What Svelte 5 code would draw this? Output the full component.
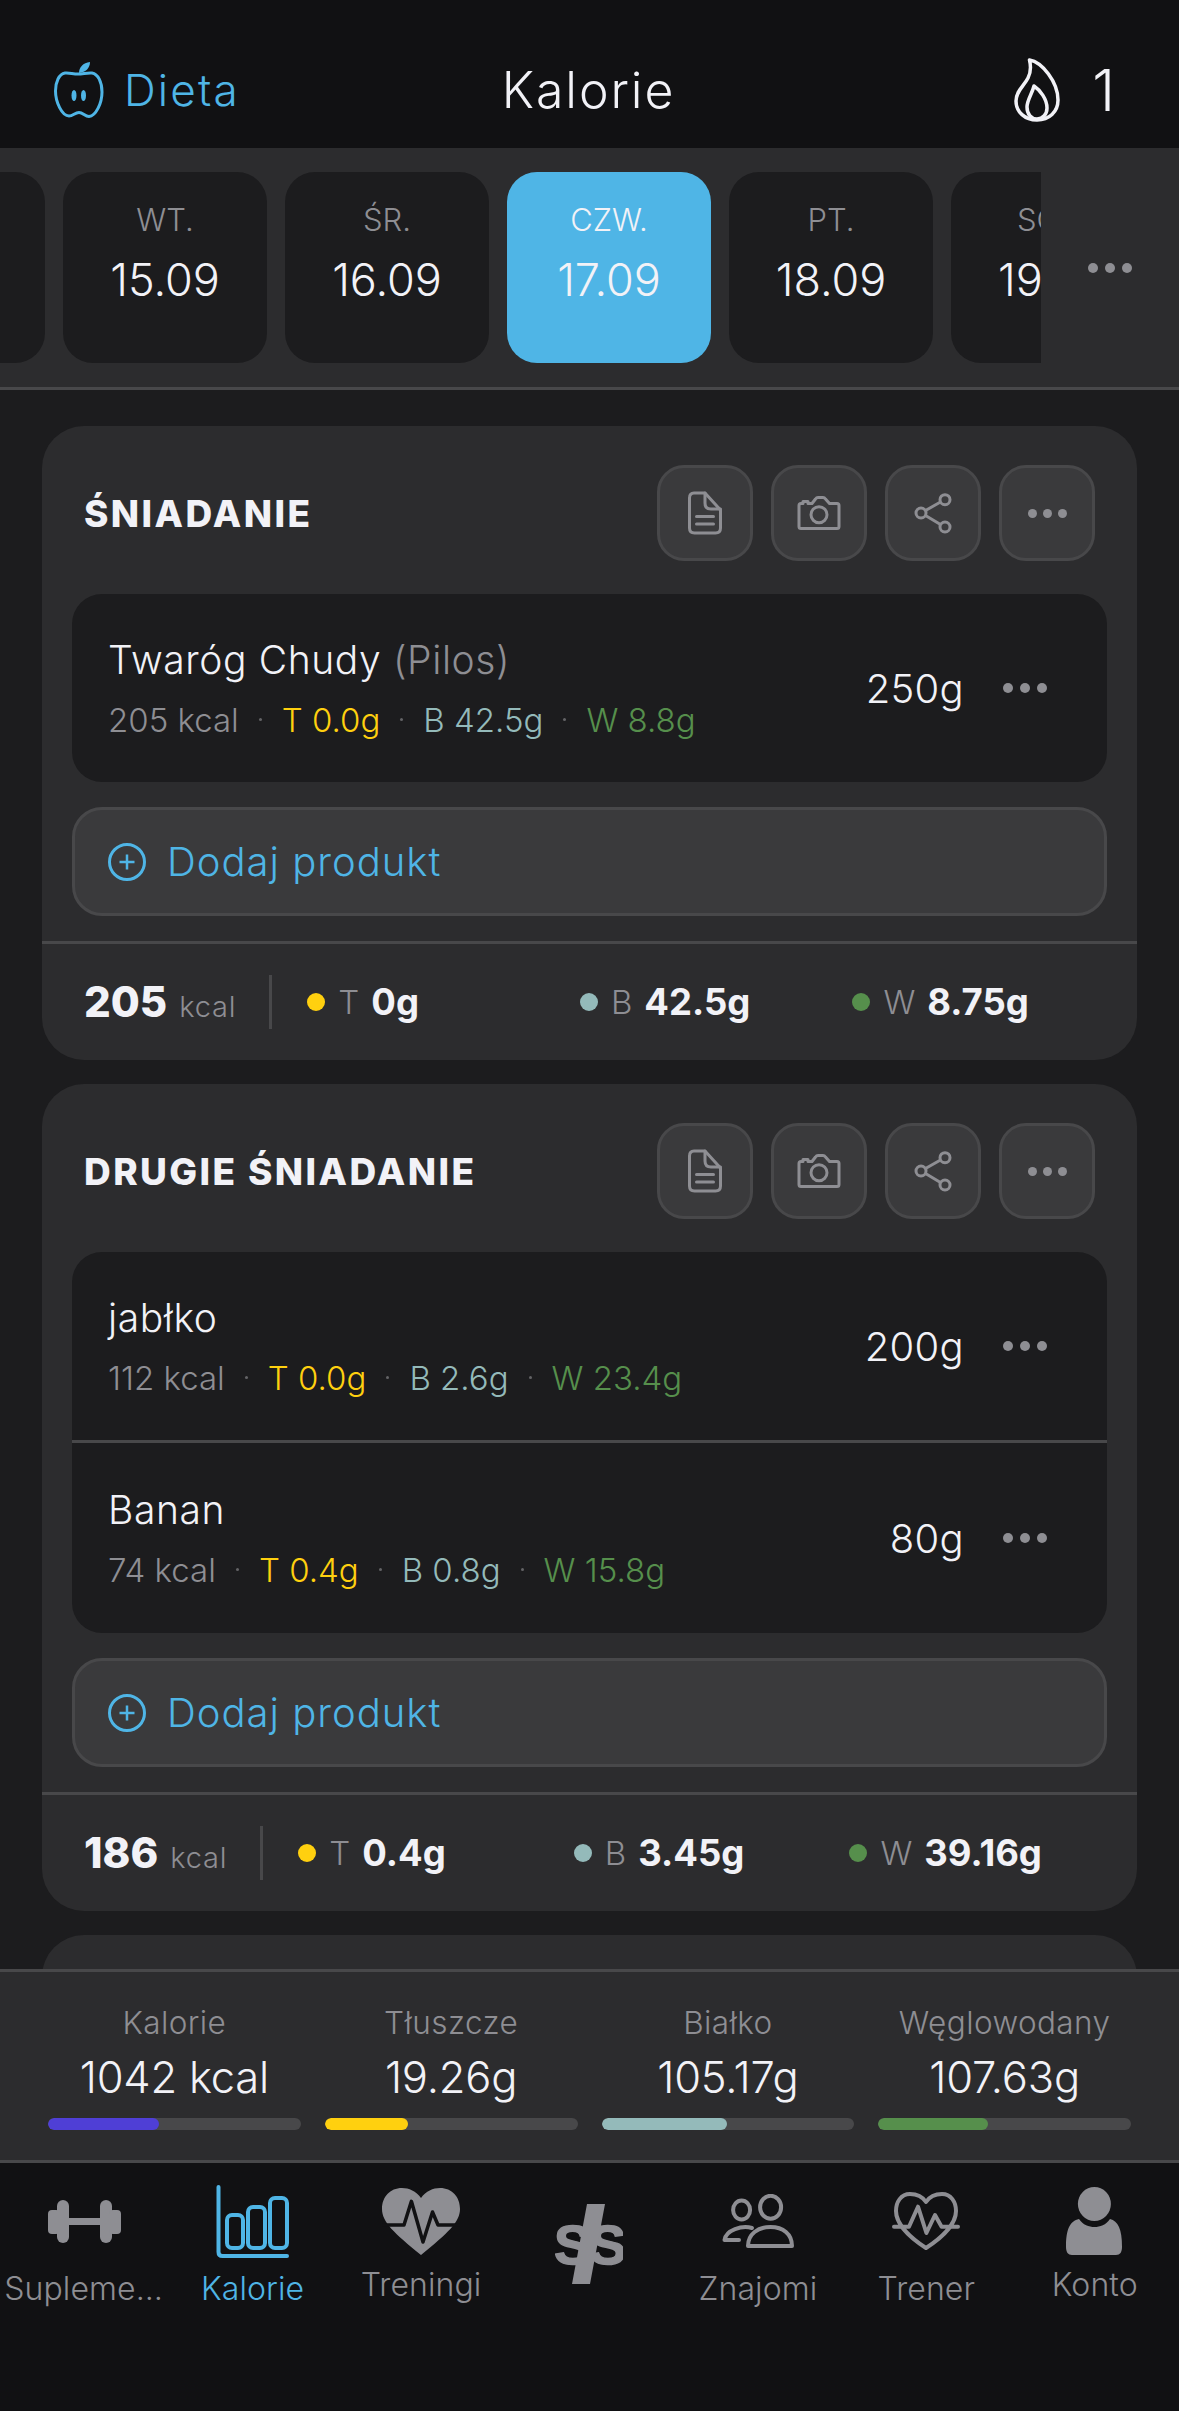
<script>
  const days = [
    { name: "ŚR.", date: "14.09" },
    { name: "WT.", date: "15.09" },
    { name: "ŚR.", date: "16.09" },
    { name: "CZW.", date: "17.09", active: true },
    { name: "PT.", date: "18.09" },
    { name: "SOB.", date: "19.09" },
  ];

  const meals = [
    {
      name: "Śniadanie",
      items: [
        { name: "Twaróg Chudy", brand: "(Pilos)", kcal: 205, t: "0.0g", b: "42.5g", w: "8.8g", grams: "250g" },
      ],
      kcal: 205,
      t: "0g",
      b: "42.5g",
      w: "8.75g",
    },
    {
      name: "Drugie śniadanie",
      items: [
        { name: "jabłko", kcal: 112, t: "0.0g", b: "2.6g", w: "23.4g", grams: "200g" },
        { name: "Banan", kcal: 74, t: "0.4g", b: "0.8g", w: "15.8g", grams: "80g" },
      ],
      kcal: 186,
      t: "0.4g",
      b: "3.45g",
      w: "39.16g",
    },
  ];

  const totals = [
    { label: "Kalorie", value: "1042 kcal", fill: 44, color: "#4f3fd6" },
    { label: "Tłuszcze", value: "19.26g", fill: 33, color: "#ffd00f" },
    { label: "Białko", value: "105.17g", fill: 49.5, color: "#94baba" },
    { label: "Węglowodany", value: "107.63g", fill: 43.5, color: "#568f4c" },
  ];
</script>

{#snippet dots()}
  <span class="dots"><i></i><i></i><i></i></span>
{/snippet}

<div class="app">
  <header class="topbar">
    <div class="back">
      <svg width="50" height="58" viewBox="0 0 50 58" fill="none" stroke="currentColor" stroke-width="3">
        <path d="M24 13C19 13 15 11.5 11 12C5 13 1.5 21 1.5 30C1.5 41 8 55 15 55C19 55 21 51.5 25 51.5C29 51.5 31 55.5 35 55.5C42 55 48 42 48 31C48 21 44 13 38 12C33 11.5 29 13 24 13Z" />
        <path d="M25 12C25 6 29 2 36 1C36 7 32 11 25 12Z" fill="currentColor" stroke="none" />
        <ellipse cx="20" cy="34.5" rx="2.5" ry="5.5" fill="currentColor" stroke="none" />
        <ellipse cx="29.5" cy="34.5" rx="2.5" ry="5.5" fill="currentColor" stroke="none" />
      </svg>
      <span>Dieta</span>
    </div>
    <h1>Kalorie</h1>
    <div class="streak">
      <svg width="46" height="64" viewBox="0 0 46 64" fill="none" stroke="currentColor" stroke-width="3.5" stroke-linejoin="round">
        <path d="M15.5 2C28 4 44 24 44 42C44 54 35 62 23 62C11 62 2 54 2 43C2 33 10 28 14 20C17 14 17 8 15.5 2Z" />
        <path d="M20 28C26 32 33 41 33 50C33 56 29 61 23 61C17 61 13 56 13 49C13 42 18 36 20 28Z" />
      </svg>
      <span>1</span>
    </div>
  </header>

  <nav class="days">
    <div class="days-row">
      {#each days as day}
        <div class="day" class:active={day.active}>
          <span class="day-name">{day.name}</span>
          <span class="day-date">{day.date}</span>
        </div>
      {/each}
    </div>
    <div class="days-more">{@render dots()}</div>
  </nav>

  <main class="meals">
    {#each meals as meal}
      <section class="card">
        <div class="card-head">
          <h2>{meal.name}</h2>
          <div class="actions">
            <button>
              <svg width="48" height="48" viewBox="0 0 48 48" fill="none" stroke="currentColor" stroke-width="3" stroke-linecap="round" stroke-linejoin="round">
                <path d="M13 4H24L39.5 21V39Q39.5 44 34.5 44H13.5Q8.5 44 8.5 39V9Q8.5 4 13 4Z" />
                <path d="M24 4V14Q24 20 30 20H39.5M15.5 27.5H32.5M15.5 35H32.5" />
              </svg>
            </button>
            <button>
              <svg width="48" height="48" viewBox="0 0 48 48" fill="none" stroke="currentColor" stroke-width="3" stroke-linejoin="round">
                <path d="M6 14.5H8V12.5H13V14.5H17L20.5 10Q21.5 8.5 23 8.5H28Q29.5 8.5 30.5 10L34.5 14.5H42Q44 14.5 44 16.5V37.5Q44 39.5 42 39.5H6Q4 39.5 4 37.5V16.5Q4 14.5 6 14.5Z" />
                <circle cx="24" cy="25.7" r="8" />
              </svg>
            </button>
            <button>
              <svg width="48" height="48" viewBox="0 0 48 48" fill="none" stroke="currentColor" stroke-width="3">
                <circle cx="36" cy="10.7" r="5" />
                <circle cx="12" cy="24" r="5" />
                <circle cx="36" cy="38" r="5" />
                <path d="M16.5 21.5L31.5 13M16.5 26.5L31.5 35.5" />
              </svg>
            </button>
            <button>{@render dots()}</button>
          </div>
        </div>

        <ul class="items">
          {#each meal.items as item}
            <li>
              <div class="item-text">
                <p class="item-name">{item.name} {#if item.brand}<span>{item.brand}</span>{/if}</p>
                <p class="item-sub">
                  <span class="muted">{item.kcal} kcal</span>
                  <i class="sep"></i>
                  <span class="fat">T {item.t}</span>
                  <i class="sep"></i>
                  <span class="protein">B {item.b}</span>
                  <i class="sep"></i>
                  <span class="carbs">W {item.w}</span>
                </p>
              </div>
              <span class="grams">{item.grams}</span>
              {@render dots()}
            </li>
          {/each}
        </ul>

        <button class="add">
          <svg width="38" height="38" viewBox="0 0 38 38" fill="none" stroke="currentColor" stroke-width="3">
            <circle cx="19" cy="19" r="17.5" />
            <path d="M19 11.5V26.5M11.5 19H26.5" stroke-width="2.5" />
          </svg>
          Dodaj produkt
        </button>

        <footer class="summary">
          <div class="summary-kcal"><b>{meal.kcal}</b> <span>kcal</span></div>
          <div class="macros">
            <div class="macro"><i style="background:#ffd00f"></i><span>T</span><b>{meal.t}</b></div>
            <div class="macro"><i style="background:#94baba"></i><span>B</span><b>{meal.b}</b></div>
            <div class="macro"><i style="background:#568f4c"></i><span>W</span><b>{meal.w}</b></div>
          </div>
        </footer>
      </section>
    {/each}
    <section class="card next"></section>
  </main>

  <section class="totals">
    {#each totals as total}
      <div class="total">
        <span class="total-label">{total.label}</span>
        <span class="total-value">{total.value}</span>
        <div class="bar"><div style="width:{total.fill}%;background:{total.color}"></div></div>
      </div>
    {/each}
  </section>

  <nav class="tabs">
    <div class="tab">
      <div class="tab-icon">
        <svg width="73" height="43" viewBox="0 0 73 43" fill="currentColor">
          <rect x="0" y="10" width="12" height="24" rx="4" />
          <rect x="9" y="0" width="12" height="43" rx="6" />
          <rect x="20" y="18" width="33" height="7" />
          <rect x="52" y="0" width="12" height="43" rx="6" />
          <rect x="61" y="10" width="12" height="24" rx="4" />
        </svg>
      </div>
      <span class="tab-label">Suplementy</span>
    </div>
    <div class="tab active">
      <div class="tab-icon">
        <svg width="73" height="73" viewBox="0 0 73 73" fill="none" stroke="currentColor" stroke-width="4" stroke-linecap="round">
          <path d="M2.5 2V67Q2.5 71 6.5 71H71" />
          <rect x="11" y="30" width="16" height="33" rx="5" />
          <rect x="32" y="22" width="17" height="41" rx="5" />
          <rect x="54" y="13" width="17" height="50" rx="5" />
        </svg>
      </div>
      <span class="tab-label">Kalorie</span>
    </div>
    <div class="tab raised">
      <div class="tab-icon">
        <svg width="78" height="67" viewBox="0 0 78 67" fill="currentColor">
          <path d="M39 10C34 3 27 0 20 0C8 0 0 9 0 21C0 34 12 45 39 67C66 45 78 34 78 21C78 9 70 0 58 0C51 0 44 3 39 10Z" />
          <path d="M0 37H22L29.4 13.3L41 54L50.5 24L56 37H78" fill="none" stroke="#111113" stroke-width="3.5" stroke-linejoin="round" />
        </svg>
      </div>
      <span class="tab-label">Treningi</span>
    </div>
    <div class="tab money">
      <svg width="68" height="82" viewBox="0 0 68 82" fill="currentColor">
        <text x="-1" y="61" class="money-s">S</text>
        <text x="34" y="61" class="money-s">S</text>
        <path d="M32 1H50L35 81H17Z" />
      </svg>
    </div>
    <div class="tab">
      <div class="tab-icon">
        <svg width="72" height="54" viewBox="0 0 72 54" fill="none" stroke="currentColor" stroke-width="4" stroke-linejoin="round" stroke-linecap="round">
          <ellipse cx="19.6" cy="16" rx="8.5" ry="9.5" />
          <ellipse cx="48.6" cy="13.3" rx="10.5" ry="11.5" />
          <path d="M26 52C26 40 36 33 48.5 33C61 33 70 40 70 52Z" />
          <path d="M30 34C20 31 4 36 2.5 46H17" />
        </svg>
      </div>
      <span class="tab-label">Znajomi</span>
    </div>
    <div class="tab">
      <div class="tab-icon">
        <svg width="68" height="58" viewBox="0 0 68 58" fill="none" stroke="currentColor" stroke-width="4" stroke-linejoin="round" stroke-linecap="round">
          <path d="M34 10C30 4 24 2 18 2C9 2 4 10 4 19C4 33 20 47 34 56C48 47 64 33 64 19C64 10 59 2 50 2C44 2 38 4 34 10Z" />
          <path d="M2 34.7H17L26 14.7L34.4 41L43 23L49.6 34.7H66" />
        </svg>
      </div>
      <span class="tab-label">Trener</span>
    </div>
    <div class="tab raised">
      <div class="tab-icon">
        <svg width="57" height="68" viewBox="0 0 57 68" fill="currentColor">
          <ellipse cx="28.4" cy="17" rx="16.5" ry="17" />
          <path d="M13 32C17 38 23 40 28.5 40C34 40 40 38 44 32C52 34 56 42 56 60C56 65 54 68 50 68H6C2 68 0 65 0 60C0 42 4 34 13 32Z" />
        </svg>
      </div>
      <span class="tab-label">Konto</span>
    </div>
  </nav>
</div>

<style>
  :global(body) {
    background: #1c1c1e;
  }

  .app {
    display: flex;
    flex-direction: column;
    height: 2411px;
    overflow: hidden;
    font-family: "Inter", "Noto Sans", sans-serif;
    color: #f2f2f7;
    background: #1c1c1e;
  }

  p,
  h1,
  h2,
  ul {
    margin: 0;
    padding: 0;
  }

  /* top bar */
  .topbar {
    flex: 0 0 148px;
    display: grid;
    grid-template-columns: 1fr auto 1fr;
    align-items: center;
    padding: 32px 64px 0 54px;
    box-sizing: border-box;
    background: #111113;
  }

  .back {
    display: flex;
    align-items: center;
    gap: 20px;
    color: #4fb5e6;
    font-size: 44px;
    letter-spacing: 2.2px;
    font-weight: 350;
  }

  h1 {
    margin-left: 8px;
    font-size: 50px;
    font-weight: 350;
    letter-spacing: 1.9px;
  }

  .streak {
    display: flex;
    justify-content: flex-end;
    align-items: center;
    gap: 32px;
    font-size: 58px;
    font-weight: 350;
  }

  /* day picker */
  .days {
    flex: 0 0 242px;
    display: flex;
    box-sizing: border-box;
    background: #2c2c2e;
    border-bottom: 3px solid #48484a;
  }

  .days-row {
    flex: 1;
    min-width: 0;
    display: flex;
    gap: 18px;
    padding-top: 24px;
    margin-left: -159px;
    overflow: hidden;
    height: 191px;
  }

  .day {
    flex: 0 0 204px;
    display: flex;
    flex-direction: column;
    align-items: center;
    height: 191px;
    border-radius: 30px;
    background: #1c1c1e;
  }

  .day.active {
    background: #4fb5e6;
  }

  .day-name {
    margin-top: 28px;
    font-size: 31px;
    line-height: 40px;
    font-weight: 350;
    color: #8e8e93;
  }

  .day.active .day-name {
    color: #f2f2f7;
  }

  .day-date {
    margin-top: 14px;
    font-size: 45px;
    line-height: 52px;
    font-weight: 350;
  }

  .days-more {
    flex: 0 0 138px;
    display: flex;
    align-items: center;
    justify-content: center;
    padding-top: 0;
  }

  .dots {
    display: inline-flex;
    gap: 7px;
  }

  .dots i {
    width: 10px;
    height: 10px;
    border-radius: 50%;
    background: #8e8e93;
  }

  /* meal cards */
  .meals {
    flex: 1;
    min-height: 0;
    overflow: hidden;
    display: flex;
    flex-direction: column;
    gap: 24px;
    padding: 36px 42px 0;
    box-sizing: border-box;
  }

  .card {
    flex: none;
    display: flex;
    flex-direction: column;
    border-radius: 42px;
    background: #2c2c2e;
  }

  .card.next {
    height: 200px;
  }

  .card-head {
    display: flex;
    align-items: center;
    justify-content: space-between;
    padding: 39px 42px 0;
    height: 96px;
  }

  h2 {
    font-size: 37px;
    font-weight: 800;
    text-transform: uppercase;
    letter-spacing: 2.4px;
  }

  .actions {
    display: flex;
    gap: 18px;
  }

  .actions button {
    width: 96px;
    height: 96px;
    padding: 0;
    display: flex;
    align-items: center;
    justify-content: center;
    border: 3px solid #48484a;
    border-radius: 27px;
    background: #3a3a3c;
    color: #8e8e93;
  }

  .actions .dots {
    gap: 6px;
  }

  .actions .dots i {
    width: 9px;
    height: 9px;
  }

  .items {
    list-style: none;
    margin: 33px 30px 0;
    border-radius: 30px;
    background: #1c1c1e;
    overflow: hidden;
  }

  .items li {
    display: flex;
    align-items: center;
    height: 188px;
    padding: 0 60px 0 36px;
  }

  .items li + li {
    height: 190px;
    border-top: 3px solid #48484a;
  }

  .item-text {
    flex: 1;
    min-width: 0;
    padding-top: 3px;
  }

  .item-name {
    font-size: 39px;
    line-height: 60px;
    font-weight: 350;
    letter-spacing: 0.6px;
  }

  .item-name span {
    color: #8e8e93;
  }

  .item-sub {
    display: flex;
    align-items: center;
    gap: 20px;
    font-size: 33px;
    line-height: 60px;
    font-weight: 350;
  }

  .sep {
    width: 3px;
    height: 3px;
    border-radius: 50%;
    background: #636366;
  }

  .muted {
    color: #8e8e93;
  }

  .fat {
    color: #ffd00f;
  }

  .protein {
    color: #94baba;
  }

  .carbs {
    color: #568f4c;
  }

  .grams {
    margin-right: 39px;
    font-size: 40px;
    font-weight: 350;
    letter-spacing: 0.3px;
  }

  .add {
    display: flex;
    align-items: center;
    gap: 21px;
    height: 109px;
    margin: 25px 30px;
    padding: 0 0 0 33px;
    border: 3px solid #48484a;
    border-radius: 30px;
    background: #3a3a3c;
    color: #4fb5e6;
    font: inherit;
    font-size: 40px;
    font-weight: 350;
    letter-spacing: 1px;
  }

  .summary {
    display: flex;
    align-items: center;
    height: 119px;
    box-sizing: border-box;
    padding: 0 12px 0 42px;
    border-top: 3px solid #48484a;
  }

  .summary-kcal {
    display: flex;
    align-items: baseline;
    gap: 12px;
    height: 54px;
    padding-right: 33px;
    border-right: 3px solid #48484a;
    line-height: 54px;
  }

  .summary-kcal b {
    font-size: 42px;
    font-weight: 800;
  }

  .summary-kcal span {
    font-size: 29px;
    font-weight: 350;
    letter-spacing: 0.8px;
    color: #8e8e93;
  }

  .macros {
    flex: 1;
    display: grid;
    grid-template-columns: repeat(3, 1fr);
    margin-left: 35px;
  }

  .macro {
    display: flex;
    align-items: center;
    font-size: 33px;
  }

  .macro i {
    width: 18px;
    height: 18px;
    margin-right: 13px;
    border-radius: 50%;
  }

  .macro span {
    margin-right: 12px;
    font-weight: 350;
    color: #8e8e93;
  }

  .macro b {
    font-size: 36.5px;
    font-weight: 700;
  }

  /* day totals */
  .totals {
    flex: 0 0 194px;
    box-sizing: border-box;
    display: grid;
    grid-template-columns: repeat(4, 1fr);
    column-gap: 24px;
    padding: 0 48px;
    background: #2c2c2e;
    border-top: 3px solid #48484a;
    border-bottom: 3px solid #48484a;
  }

  .total {
    display: flex;
    flex-direction: column;
    align-items: center;
    padding-top: 31px;
  }

  .total-label {
    font-size: 31.5px;
    line-height: 40px;
    font-weight: 350;
    letter-spacing: 0.4px;
    color: #8e8e93;
  }

  .total-value {
    margin-top: 7px;
    font-size: 43.5px;
    line-height: 54px;
    font-weight: 350;
    letter-spacing: -0.2px;
    white-space: nowrap;
  }

  .bar {
    align-self: stretch;
    height: 12px;
    margin-top: 14px;
    border-radius: 6px;
    background: #48484a;
    overflow: hidden;
  }

  .bar div {
    height: 100%;
    border-radius: 6px;
  }

  /* bottom tabs */
  .tabs {
    flex: 0 0 248px;
    display: grid;
    grid-template-columns: repeat(7, 1fr);
    background: #111113;
    color: #8e8e93;
  }

  .tab {
    min-width: 0;
    display: flex;
    flex-direction: column;
    align-items: center;
    padding-top: 20px;
  }

  .tab.active {
    color: #4fb5e6;
  }

  .tab.money {
    padding-top: 40px;
  }

  .money-s {
    font-family: "Liberation Sans", sans-serif;
    font-size: 56px;
    font-weight: 700;
    stroke: currentColor;
    stroke-width: 1.5px;
  }

  .tab-icon {
    height: 76px;
    display: flex;
    align-items: center;
    justify-content: center;
  }

  .tab-label {
    max-width: 160px;
    margin-top: 10px;
    font-size: 32px;
    line-height: 40px;
    font-weight: 350;
    letter-spacing: 0.1px;
    white-space: nowrap;
    overflow: hidden;
    text-overflow: ellipsis;
  }

  .tab.raised .tab-label {
    margin-top: 6px;
  }
</style>
